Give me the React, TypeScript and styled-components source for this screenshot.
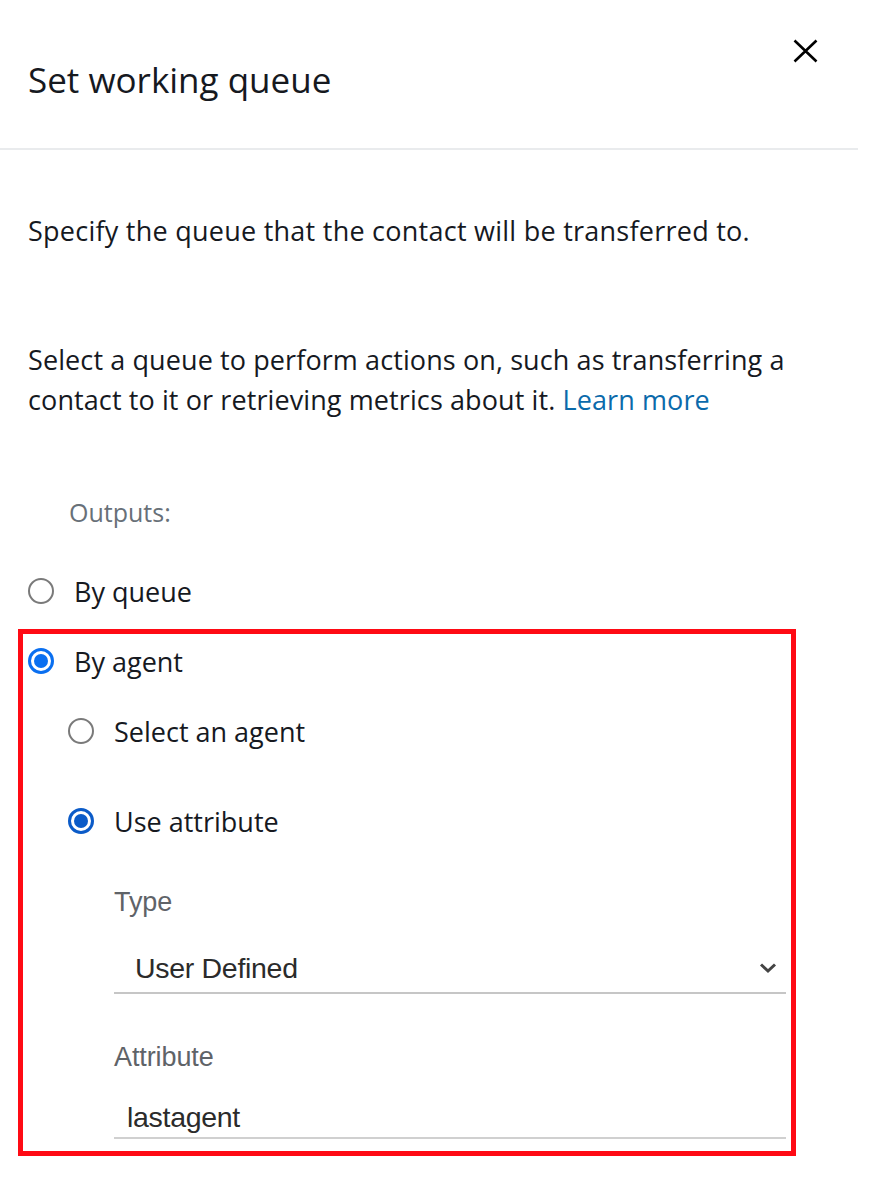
import React from "react";
import styled, { createGlobalStyle } from "styled-components";

const Global = createGlobalStyle`
  html, body { margin: 0; padding: 0; background: #ffffff; }
  body { font-family: "Open Sans", "Noto Sans", sans-serif; color: #16191f; }
  * { box-sizing: border-box; }
`;

const Panel = styled.div`
  width: 880px;
  min-height: 1182px;
  background: #fff;
`;

const Header = styled.header`
  width: 858px;
  height: 150px;
  border-bottom: 2px solid #e9ebed;
  display: flex;
  justify-content: space-between;
  align-items: flex-start;
  padding: 0 40px 0 28px;
`;

const Title = styled.h1`
  margin: 60px 0 0;
  font-family: "Open Sans", sans-serif;
  font-weight: 400;
  font-size: 35px;
  line-height: 40px;
  letter-spacing: 0px;
  color: #16191f;
`;

const CloseButton = styled.button`
  margin-top: 39px;
  width: 25px;
  height: 24px;
  padding: 0;
  border: none;
  background: none;
  display: flex;
  cursor: pointer;
`;

const Body = styled.div`
  padding: 61px 0 0 28px;
`;

const Paragraph = styled.p<{ $mt?: number }>`
  margin: ${(p) => p.$mt ?? 0}px 0 0;
  width: 800px;
  font-size: 27px;
  line-height: 40px;
  letter-spacing: 0.1px;
  color: #16191f;
`;

const Lead = styled(Paragraph)`
  letter-spacing: 0.25px;
`;

const Link = styled.a`
  color: #0b6aab;
  text-decoration: none;
`;

const OutputsLabel = styled.div`
  margin: 76px 0 0 41px;
  font-size: 25px;
  line-height: 32px;
  color: #687078;
`;

const RadioRow = styled.label<{ $mt?: number }>`
  display: flex;
  align-items: center;
  height: 40px;
  margin-top: ${(p) => p.$mt ?? 0}px;
  font-size: 27px;
  color: #16191f;
  gap: 20px;
`;

const RadioCircle = styled.span<{ $checked?: boolean; $color?: string }>`
  width: 26px;
  height: 26px;
  border-radius: 50%;
  flex: none;
  border: ${(p) => (p.$checked ? `3px solid ${p.$color}` : "2px solid #7a7a7a")};
  display: flex;
  align-items: center;
  justify-content: center;
  background: #fff;
  &::after {
    content: "";
    display: ${(p) => (p.$checked ? "block" : "none")};
    width: 14px;
    height: 14px;
    border-radius: 50%;
    background: ${(p) => p.$color};
  }
`;

const Highlight = styled.div`
  margin: 18px 0 0 -10px;
  width: 778px;
  border: 5px solid #ff0a14;
  padding: 7px 0 12px 5px;
`;

const Nested = styled.div`
  margin-left: 40px;
`;

const Fields = styled.div`
  margin-left: 46px;
  width: 672px;
  display: flex;
  flex-direction: column;
`;

const FieldLabel = styled.div<{ $mt: number }>`
  margin-top: ${(p) => p.$mt}px;
  font-family: "Liberation Sans", Arial, sans-serif;
  font-size: 27px;
  line-height: 32px;
  color: #5f6368;
  letter-spacing: -0.1px;
`;

const SelectBox = styled.div`
  margin-top: 26px;
  height: 50px;
  border-bottom: 2px solid #c6c6c6;
  display: flex;
  align-items: center;
  justify-content: space-between;
  padding: 0 9px 0 21px;
  font-family: "Liberation Sans", Arial, sans-serif;
  font-size: 28.5px;
  color: #2b2b2b;
  letter-spacing: -0.3px;
`;

const InputBox = styled.div`
  margin-top: 24px;
  height: 42px;
  border-bottom: 2px solid #d0d0d0;
  display: flex;
  align-items: center;
  padding: 0 0 0 13px;
  font-family: "Liberation Sans", Arial, sans-serif;
  font-size: 28.5px;
  color: #2b2b2b;
  letter-spacing: -0.3px;
`;

type RadioProps = { label: string; checked?: boolean; color?: string; mt?: number };

function Radio({ label, checked, color, mt }: RadioProps) {
  return (
    <RadioRow $mt={mt}>
      <RadioCircle $checked={checked} $color={color} />
      {label}
    </RadioRow>
  );
}

export default function App() {
  return (
    <Panel>
      <Global />
      <Header>
        <Title>Set working queue</Title>
        <CloseButton aria-label="Close">
          <svg width="25" height="24" viewBox="0 0 25 24">
            <path d="M1.5 1.5 L23.5 22.5 M23.5 1.5 L1.5 22.5" stroke="#000" strokeWidth="2.6" fill="none" />
          </svg>
        </CloseButton>
      </Header>
      <Body>
        <Lead>Specify the queue that the contact will be transferred to.</Lead>
        <Paragraph $mt={89}>
          Select a queue to perform actions on, such as transferring a contact to it or retrieving
          metrics about it. <Link href="#">Learn more</Link>
        </Paragraph>
        <OutputsLabel>Outputs:</OutputsLabel>
        <Radio label="By queue" mt={43} />
        <Highlight>
          <Radio label="By agent" checked color="#0a6ff0" />
          <Nested>
            <Radio label="Select an agent" mt={30} />
            <Radio label="Use attribute" checked color="#0b5bc8" mt={50} />
            <Fields>
              <FieldLabel $mt={45}>Type</FieldLabel>
              <SelectBox>
                <span>User Defined</span>
                <svg width="18" height="12" viewBox="0 0 18 12">
                  <path d="M2 2.5 L9 9 L16 2.5" stroke="#444" strokeWidth="3" fill="none" />
                </svg>
              </SelectBox>
              <FieldLabel $mt={47}>Attribute</FieldLabel>
              <InputBox>lastagent</InputBox>
            </Fields>
          </Nested>
        </Highlight>
      </Body>
    </Panel>
  );
}
